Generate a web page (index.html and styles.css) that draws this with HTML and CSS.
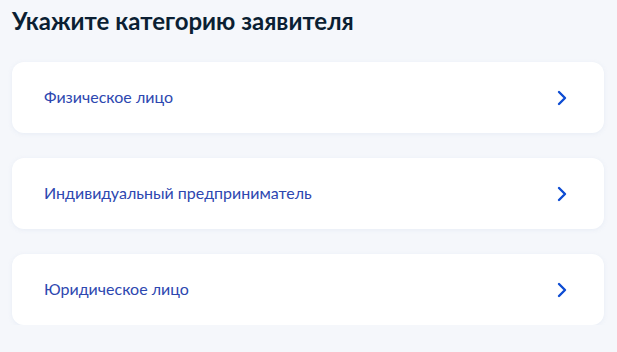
FILE: index.html
```html
<!DOCTYPE html>
<html lang="ru">
<head>
    <meta charset="UTF-8">
    <meta name="viewport" content="width=device-width, initial-scale=1.0">
    <title>Категория заявителя</title>
    <link rel="stylesheet" href="styles.css">
</head>
<body>
    <div class="page">
        <h2 class="page-title">Укажите категорию заявителя</h2>
        <div class="choice-list">
            <a class="choice" href="#">
                <span class="choice-text">Физическое лицо</span>
                <svg class="choice-arrow" width="12" height="16" viewBox="0 0 12 16"><path d="M3 2l6 6-6 6" fill="none" stroke="#0d4cd3" stroke-width="2.4" stroke-linecap="round" stroke-linejoin="round"/></svg>
            </a>
            <a class="choice" href="#">
                <span class="choice-text">Индивидуальный предприниматель</span>
                <svg class="choice-arrow" width="12" height="16" viewBox="0 0 12 16"><path d="M3 2l6 6-6 6" fill="none" stroke="#0d4cd3" stroke-width="2.4" stroke-linecap="round" stroke-linejoin="round"/></svg>
            </a>
            <a class="choice" href="#">
                <span class="choice-text">Юридическое лицо</span>
                <svg class="choice-arrow" width="12" height="16" viewBox="0 0 12 16"><path d="M3 2l6 6-6 6" fill="none" stroke="#0d4cd3" stroke-width="2.4" stroke-linecap="round" stroke-linejoin="round"/></svg>
            </a>
        </div>
    </div>
</body>
</html>
```

FILE: styles.css
```css
body {
    margin: 0;
    background: #f5f7fb;
    font-family: Lato, "Noto Sans", sans-serif;
}
.page {
    padding: 6px 13px 0 12px;
}
.page-title {
    margin: 0 0 26px;
    font-size: 24px;
    line-height: 30px;
    font-weight: 700;
    color: #0b1f33;
}
.choice-list {
    display: flex;
    flex-direction: column;
    gap: 25px;
}
.choice {
    display: flex;
    align-items: center;
    justify-content: space-between;
    height: 71px;
    padding: 0 36px 0 32px;
    background: #fff;
    border-radius: 12px;
    box-shadow: 0 1px 4px rgba(230, 235, 245, 0.9);
    text-decoration: none;
}
.choice-text {
    font-size: 16px;
    line-height: 20px;
    margin-top: -2px;
    color: #2d47b0;
}
.choice-arrow {
    display: block;
}
```
